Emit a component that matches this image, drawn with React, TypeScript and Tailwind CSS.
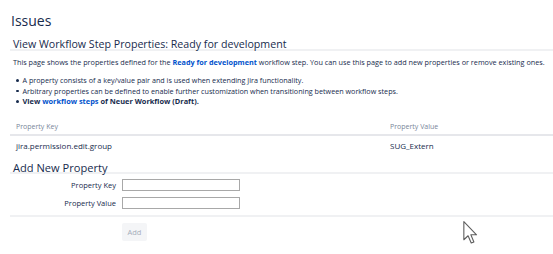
import React from 'react'

const font = "font-['Open_Sans','Noto_Sans',sans-serif]"

function Cursor() {
  return (
    <svg
      className="absolute left-[463px] top-[221px]"
      width="15"
      height="23"
      viewBox="0 0 12 19"
      fill="none"
    >
      <path
        d="M0.5 0.5 L0.5 15.5 L4 12.2 L6.6 18.2 L8.8 17.3 L6.3 11.4 L11 11.4 Z"
        fill="#ffffff"
        stroke="#5e5e5e"
        strokeWidth="0.9"
        strokeLinejoin="round"
      />
    </svg>
  )
}

function Bullet({ children, className = '' }: { children: React.ReactNode; className?: string }) {
  return (
    <li className={`flex items-center ${className}`}>
      <span className="mr-[4px] h-[2.5px] w-[2.5px] shrink-0 rounded-full bg-[#172b4d]" />
      <span>{children}</span>
    </li>
  )
}

export default function App() {
  return (
    <div className={`relative w-[553px] h-[254px] overflow-hidden bg-white text-[#172b4d] ${font}`}>
      <h1 className="h-[34px] pt-[12px] pl-[11px] text-[14px] leading-[18px]">Issues</h1>

      <div className="pl-[10px]">
        <h2 className="flex h-[17px] items-end border-b-2 border-[#f0f1f3] pl-[3px] text-[10.65px] leading-[10px]">
          View Workflow Step Properties: Ready for development
        </h2>

        <p className="whitespace-nowrap pl-[3px] pt-[6px] text-[7.25px] leading-[10px]">
          This page shows the properties defined for the{' '}
          <a className="font-bold text-[#0052cc]">Ready for development</a> workflow step. You can use this page
          to add new properties or remove existing ones.
        </p>

        <ul className="mt-[8px] pl-[6px] text-[7.2px] leading-[10.5px]">
          <Bullet>A property consists of a key/value pair and is used when extending Jira functionality.</Bullet>
          <Bullet>
            Arbitrary properties can be defined to enable further customization when transitioning between workflow steps.
          </Bullet>
          <Bullet className="font-bold text-[7.4px]">
            View <a className="text-[#0052cc]">workflow steps</a> of Neuer Workflow (Draft).
          </Bullet>
        </ul>

        <div className="mt-[1px] flex h-[28px] border-b-2 border-[#e6e7eb] pt-[14px] text-[7px] leading-[10px] text-[#7a869a]">
          <div className="w-[380px] pl-[6px]">Property Key</div>
          <div>Property Value</div>
        </div>
        <div className="flex h-[25px] pt-[5px] text-[8px] leading-[10px]">
          <div className="w-[380px] pl-[6px]">jira.permission.edit.group</div>
          <div>SUG_Extern</div>
        </div>

        <h2 className="flex h-[13px] items-end border-b-2 border-[#f0f1f3] pl-[3px] text-[11.1px] leading-[9px]">
          Add New Property
        </h2>

        <div className="grid grid-cols-[106px_118px] gap-x-[6px] gap-y-[6px] border-b-2 border-[#f0f1f3] pt-[5px] pb-[6px] text-[7.5px]">
          <label className="self-center text-right leading-[10px]">Property Key</label>
          <input className="h-[12px] border border-[#a8a8a8] bg-white" />
          <label className="self-center text-right leading-[10px]">Property Value</label>
          <input className="h-[12px] border border-[#a8a8a8] bg-white" />
        </div>

        <div className="flex pl-[112px] pt-[6px]">
          <button
            disabled
            className="flex h-[18px] w-[25px] items-center justify-center rounded-[2px] bg-[#f4f5f7] text-[7.5px] leading-[10px] text-[#a5adba]"
          >
            Add
          </button>
        </div>
      </div>

      <Cursor />
    </div>
  )
}
